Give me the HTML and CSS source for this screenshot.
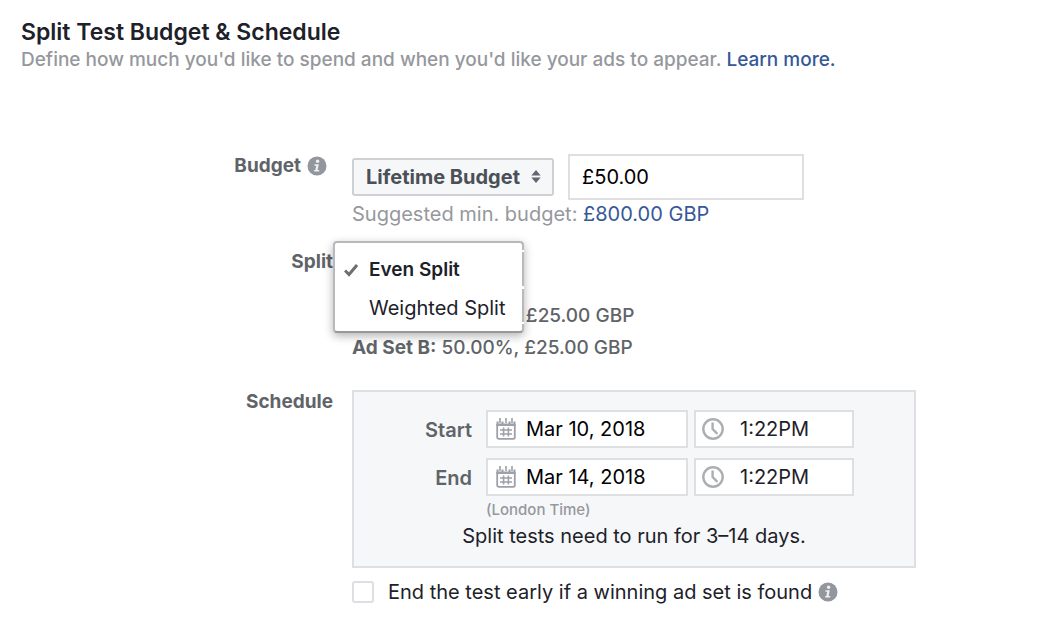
FILE: index.html
```html
<!DOCTYPE html>
<html lang="en">
<head>
  <meta charset="UTF-8">
  <meta name="viewport" content="width=device-width, initial-scale=1.0">
  <title>Split Test Budget &amp; Schedule</title>
  <link rel="stylesheet" href="styles.css">
</head>
<body>
  <svg class="sprite" aria-hidden="true">
    <symbol id="icon-info" viewBox="0 0 20 20">
      <circle cx="10" cy="10" r="9.5" fill="#92969d"/>
      <circle cx="10.6" cy="5.2" r="1.7" fill="#eeeff0"/>
      <path d="M7.4 8.2h4.4l-1.2 5.8h1.6v1.6H7.2V14h1.1l.9-4.2H7.4z" fill="#eeeff0"/>
    </symbol>
    <symbol id="icon-calendar" viewBox="0 0 20 22">
      <path d="M1.2 6v13.2a1.6 1.6 0 0 0 1.6 1.6h14.4a1.6 1.6 0 0 0 1.6-1.6V6" fill="none" stroke="#9da0a6" stroke-width="1.8"/>
      <path d="M.5 3.5h2v2h3v-2h2v2h5v-2h2v2h3v-2h2V8H.5z" fill="#9da0a6"/>
      <path d="M4 0v5M10 0v5M16 0v5" stroke="#9da0a6" stroke-width="1.6"/>
      <path d="M4 12h12M4 16h12M7.6 9.5v9M12.4 9.5v9" stroke="#9da0a6" stroke-width="1.6"/>
    </symbol>
    <symbol id="icon-clock" viewBox="0 0 22 22">
      <circle cx="11" cy="11" r="9.7" fill="none" stroke="#abaeb2" stroke-width="2.4"/>
      <path d="M10.6 4.5v6.5l4.8 4.8" fill="none" stroke="#abaeb2" stroke-width="2.4"/>
    </symbol>
  </svg>

  <main class="page">
    <header class="header">
      <h1>Split Test Budget &amp; Schedule</h1>
      <p>Define how much you'd like to spend and when you'd like your ads to appear. <a href="#">Learn more.</a></p>
    </header>

    <form class="form">
      <div class="row budget-row">
        <div class="row-label">
          <label for="budget-type">Budget</label>
          <svg class="info"><use href="#icon-info"/></svg>
        </div>
        <div class="row-content">
          <div class="budget">
            <div class="select">
              <select id="budget-type">
                <option>Lifetime Budget</option>
                <option>Daily Budget</option>
              </select>
              <svg class="select-arrows" viewBox="0 0 10 14"><path d="M5 0l5 5.8H0zM5 14l5-5.8H0z" fill="#606770"/></svg>
            </div>
            <input class="amount" type="text" value="£50.00" aria-label="Budget amount">
          </div>
          <p class="hint">Suggested min. budget: <a href="#">£800.00 GBP</a></p>
        </div>
      </div>

      <div class="row split-row">
        <div class="row-label"><span id="split-label">Split</span></div>
        <div class="row-content">
          <div class="split">
            <div class="menu" role="listbox" aria-labelledby="split-label">
              <button class="option selected" type="button" role="option" aria-selected="true">
                <svg class="check" viewBox="0 0 14 14"><path d="M1 7.5l4 4L13 2" fill="none" stroke="#6d6f73" stroke-width="3"/></svg>
                Even Split
              </button>
              <button class="option" type="button" role="option" aria-selected="false">Weighted Split</button>
            </div>
          </div>
          <p class="ad-set"><span class="covered"><b>Ad Set A:</b> 50.00%,</span> £25.00 GBP</p>
          <p class="ad-set"><b>Ad Set B:</b> 50.00%, £25.00 GBP</p>
        </div>
      </div>

      <div class="row schedule-row">
        <div class="row-label"><span>Schedule</span></div>
        <div class="row-content">
          <div class="schedule">
            <div class="date-row">
              <label for="start-date">Start</label>
              <div class="field date">
                <svg class="calendar"><use href="#icon-calendar"/></svg>
                <input id="start-date" type="text" value="Mar 10, 2018">
              </div>
              <div class="field time">
                <svg class="clock"><use href="#icon-clock"/></svg>
                <input type="text" value="1:22PM" aria-label="Start time">
              </div>
            </div>
            <div class="date-row">
              <label for="end-date">End</label>
              <div class="field date">
                <svg class="calendar"><use href="#icon-calendar"/></svg>
                <input id="end-date" type="text" value="Mar 14, 2018">
              </div>
              <div class="field time">
                <svg class="clock"><use href="#icon-clock"/></svg>
                <input type="text" value="1:22PM" aria-label="End time">
              </div>
            </div>
            <p class="timezone">(London Time)</p>
            <p class="duration">Split tests need to run for 3–14 days.</p>
          </div>
          <div class="early">
            <input id="end-early" type="checkbox">
            <label for="end-early">End the test early if a winning ad set is found</label>
            <svg class="info"><use href="#icon-info"/></svg>
          </div>
        </div>
      </div>
    </form>
  </main>
</body>
</html>
```
FILE: styles.css
```css
* {
  box-sizing: border-box;
}
body {
  margin: 0;
  background: #fff;
  color: #1d2129;
  font-family: Inter, "Liberation Sans", sans-serif;
  font-size: 20px;
  line-height: 24px;
}
h1, p {
  margin: 0;
}
a {
  color: #365899;
  text-decoration: none;
}
input, select, button {
  font: inherit;
  color: inherit;
}
.sprite {
  display: none;
}
.page {
  padding: 18px 21px;
}
.header h1 {
  font-size: 23px;
  font-weight: 600;
  line-height: 28px;
}
.header p {
  padding-top: 2px;
  color: #95989d;
  font-size: 19px;
  font-weight: 500;
}
.form {
  padding-top: 82px;
}
.row {
  display: grid;
  grid-template-columns: 312px 1fr;
  column-gap: 19px;
}
.row-label {
  display: flex;
  justify-content: flex-end;
  align-items: center;
  align-self: start;
  gap: 6px;
  color: #606468;
  font-size: 19px;
  font-weight: 700;
}
.info {
  flex: none;
  width: 20px;
  height: 20px;
}

/* Budget */
.budget-row .row-label {
  padding-right: 6px;
}
.budget {
  display: flex;
  align-items: center;
  gap: 14px;
}
.select {
  position: relative;
}
.select select {
  appearance: none;
  width: 202px;
  height: 38px;
  padding: 0 12px;
  border: 2px solid #ced0d4;
  border-radius: 3px;
  background: #f6f7f9;
  color: #4b4f56;
  font-weight: 700;
}
.select-arrows {
  position: absolute;
  top: 12px;
  right: 13px;
  width: 10px;
  height: 13px;
  pointer-events: none;
}
.amount {
  width: 236px;
  height: 46px;
  padding: 0 12px;
  border: 2px solid #dddfe2;
  color: #000;
}
.hint {
  padding-top: 2px;
  color: #95989d;
}

/* Split */
.split-row {
  padding-top: 24px;
}
.split {
  position: relative;
  height: 50px;
}
.menu {
  position: absolute;
  top: -9px;
  left: -19px;
  width: 191px;
  padding: 8px 0 4px;
  border: 2px solid #b8b9bc;
  border-bottom-color: #96989c;
  border-radius: 4px;
  background: #fff;
  box-shadow: 0 3px 10px rgba(0, 0, 0, 0.3);
}
/* breaks in the right border, level with the option edges */
.menu::after {
  content: "";
  position: absolute;
  top: 7px;
  right: -2px;
  width: 2px;
  height: 74px;
  background: linear-gradient(#fff 2px, transparent 2px 36px, #fff 36px 39px, transparent 39px 72px, #fff 72px);
}
.option {
  display: flex;
  align-items: center;
  width: 100%;
  height: 38px;
  padding: 0 0 0 34px;
  border: 0;
  background: none;
  white-space: nowrap;
}
.option.selected {
  gap: 11px;
  padding-left: 9px;
  font-size: 19px;
  font-weight: 600;
}
.check {
  width: 14px;
  height: 14px;
}
.ad-set {
  color: #606468;
  font-size: 19px;
  font-weight: 500;
  line-height: 32px;
}
/* sits under the open menu */
.covered {
  visibility: hidden;
}

/* Schedule */
.schedule-row {
  padding-top: 26px;
}
.schedule {
  max-width: 564px;
  padding: 18px 0;
  border: 2px solid #dddfe2;
  background: #f6f7f9;
}
.date-row {
  display: grid;
  grid-template-columns: 126px 202px 160px;
  column-gap: 6px;
  align-items: center;
}
.date-row + .date-row {
  margin-top: 10px;
}
.date-row label {
  padding: 2px 8px 0 0;
  color: #606468;
  font-weight: 600;
  text-align: right;
}
.field {
  display: flex;
  align-items: center;
  height: 38px;
  border: 2px solid #dddfe2;
  background: #fff;
}
.field input {
  flex: 1;
  min-width: 0;
  padding: 0;
  border: 0;
  background: none;
}
.date {
  padding-left: 8px;
}
.date input {
  margin-left: 10px;
  color: #000;
}
.time {
  padding-left: 6px;
}
.time input {
  margin-left: 16px;
}
.calendar {
  width: 20px;
  height: 22px;
}
.clock {
  width: 22px;
  height: 22px;
}
.timezone {
  padding: 4px 0 0 132px;
  color: #95989d;
  font-size: 15px;
  font-weight: 500;
  line-height: 20px;
}
.duration {
  padding-top: 4px;
  text-align: center;
}
.early {
  display: flex;
  align-items: center;
  padding-top: 12px;
}
.early input {
  appearance: none;
  width: 22px;
  height: 22px;
  margin: 0 14px 0 0;
  border: 2px solid #dddfe2;
  border-radius: 3px;
  background: #fff;
}
.early .info {
  margin-left: 6px;
}
```
